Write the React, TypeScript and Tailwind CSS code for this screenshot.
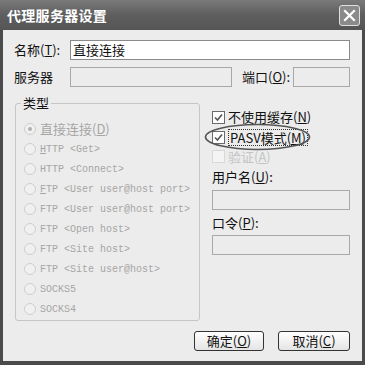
import React from 'react';

const cjk = { fontFamily: '"Noto Sans CJK SC", "Liberation Sans", sans-serif' };
const mono = { fontFamily: '"Liberation Mono", "Noto Sans CJK SC", monospace' };

const radios: { label: React.ReactNode; cjk?: boolean; checked?: boolean }[] = [
  { label: <>直接连接(<u>D</u>)</>, cjk: true, checked: true },
  { label: <><u>H</u>TTP &lt;Get&gt;</> },
  { label: <>HTTP &lt;Connect&gt;</> },
  { label: <><u>F</u>TP &lt;User user@host port&gt;</> },
  { label: <>FTP &lt;User user@host port&gt;</> },
  { label: <>FTP &lt;Open host&gt;</> },
  { label: <>FTP &lt;Site host&gt;</> },
  { label: <>FTP &lt;Site user@host&gt;</> },
  { label: <>SOCKS5</> },
  { label: <>SOCKS4</> },
];

function Radio({ checked }: { checked?: boolean }) {
  return (
    <span className="w-[12px] h-[12px] rounded-full border border-[#cfcfcf] bg-[#f0f0f0] flex items-center justify-center shrink-0">
      {checked && <span className="w-[4px] h-[4px] rounded-full bg-[#b0b0b0]" />}
    </span>
  );
}

function Check({ checked, disabled }: { checked?: boolean; disabled?: boolean }) {
  return (
    <span
      className={`w-[13px] h-[13px] border flex items-center justify-center shrink-0 ${
        disabled ? 'border-[#d8d8d8] bg-[#f4f4f4]' : 'border-[#6a6a6a] bg-white'
      }`}
    >
      {checked && (
        <svg width="9" height="9" viewBox="0 0 9 9">
          <path d="M1 4.5 L3.5 7 L8 1.5" fill="none" stroke="#555" strokeWidth="1.6" />
        </svg>
      )}
    </span>
  );
}

export default function App() {
  return (
    <div className="w-[365px] h-[365px] bg-[#4b4b4b] flex flex-col overflow-hidden" style={cjk}>
      {/* title bar */}
      <div className="h-[30px] shrink-0 flex items-center justify-between pl-[7px] pr-[5px] bg-gradient-to-b from-[#7a7a7a] via-[#5e5e5e] to-[#555555]">
        <span className="text-white font-bold text-[14px] tracking-[0.3px]">代理服务器设置</span>
        <button className="w-[21px] h-[21px] rounded-[3px] border border-[#e0e0e0] bg-[#8a8a8a] flex items-center justify-center">
          <svg width="13" height="13" viewBox="0 0 13 13">
            <path d="M2 2 L11 11 M11 2 L2 11" stroke="white" strokeWidth="2.2" strokeLinecap="square" />
          </svg>
        </button>
      </div>

      {/* body */}
      <div className="flex-1 mx-[3px] mb-[4px] bg-[#ececec] flex flex-col pl-[11px] pr-[12px] pt-[10px] text-[13px] text-[#111]">
        <div className="flex items-center h-[20px]">
          <span className="w-[56px]">名称(<u>T</u>):</span>
          <div className="flex-1 h-[20px] bg-white border border-[#8a8a8a] flex items-center px-[2px] text-[13px]">直接连接</div>
        </div>
        <div className="flex items-center h-[20px] mt-[7px]">
          <span className="w-[56px]">服务器</span>
          <div className="w-[162px] h-[20px] bg-[#ececec] border border-[#a8a8a8]" />
          <span className="ml-[10px] w-[51px]">端口(<u>O</u>):</span>
          <div className="flex-1 h-[20px] bg-[#ececec] border border-[#a8a8a8]" />
        </div>

        <div className="flex mt-[10px]">
          {/* group box */}
          <div className="relative w-[185px] h-[218px] ml-[1px] mt-[6px] border border-[#c6c6c6] rounded-[3px]">
            <span className="absolute left-[5px] -top-[9px] px-[2px] bg-[#ececec] text-[13px] leading-[16px] text-[#111]">类型</span>
            <div className="flex flex-col pt-[15px] pl-[8px]">
              {radios.map((r, i) => (
                <div key={i} className="flex items-center h-[20px] gap-[4px]">
                  <Radio checked={r.checked} />
                  <span
                    className={`text-[#a6a6a6] whitespace-nowrap ${r.cjk ? 'text-[13px]' : 'text-[10px]'}`}
                    style={r.cjk ? cjk : mono}
                  >
                    {r.label}
                  </span>
                </div>
              ))}
            </div>
          </div>

          {/* right column */}
          <div className="relative flex-1 flex flex-col pl-[12px] pt-[10px]">
            <div className="flex items-center h-[20px] gap-[3px]">
              <Check checked />
              <span>不使用缓存(<u>N</u>)</span>
            </div>
            <div className="flex items-center h-[20px] gap-[3px]">
              <Check checked />
              <span className="border border-dotted border-[#333] leading-[15px] px-[1px]">PASV模式(<u>M</u>)</span>
            </div>
            <div className="flex items-center h-[19px] gap-[3px]">
              <Check disabled />
              <span className="text-[#c4c4c4]">验证(<u>A</u>)</span>
            </div>
            <span className="mt-[2px] leading-[18px]">用户名(<u>U</u>):</span>
            <div className="h-[20px] mt-[4px] bg-[#ececec] border border-[#a8a8a8]" />
            <span className="mt-[4px] leading-[18px]">口令(<u>P</u>):</span>
            <div className="h-[20px] mt-[3px] bg-[#ececec] border border-[#a8a8a8]" />
            <svg className="absolute left-[4px] top-[26px]" width="107" height="28" viewBox="0 0 107 28">
              <ellipse cx="53.5" cy="14" rx="52" ry="12.5" fill="none" stroke="#555" strokeWidth="1.6" />
            </svg>
          </div>
        </div>

        <div className="flex justify-end gap-[14px] mt-[10px]">
          <button className="w-[70px] h-[20px] rounded-[3px] border border-[#333] bg-gradient-to-b from-white to-[#e4e4e4] text-[13px] leading-[18px]">
            确定(<u>O</u>)
          </button>
          <button className="w-[72px] h-[20px] rounded-[3px] border border-[#333] bg-gradient-to-b from-white to-[#e4e4e4] text-[13px] leading-[18px]">
            取消(<u>C</u>)
          </button>
        </div>
      </div>
    </div>
  );
}
